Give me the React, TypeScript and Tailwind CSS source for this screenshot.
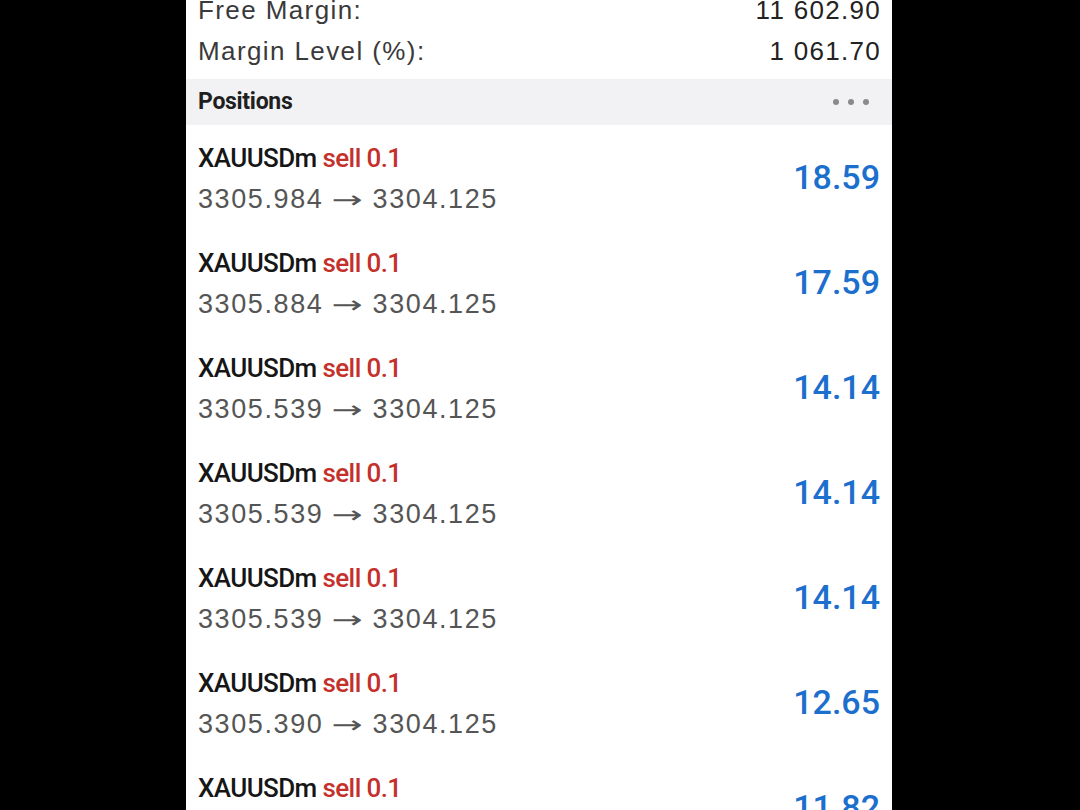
import React from 'react';

type Position = {
  symbol: string;
  side: string;
  volume: string;
  open: string;
  current: string;
  profit: string;
};

const positions: Position[] = [
  { symbol: 'XAUUSDm', side: 'sell', volume: '0.1', open: '3305.984', current: '3304.125', profit: '18.59' },
  { symbol: 'XAUUSDm', side: 'sell', volume: '0.1', open: '3305.884', current: '3304.125', profit: '17.59' },
  { symbol: 'XAUUSDm', side: 'sell', volume: '0.1', open: '3305.539', current: '3304.125', profit: '14.14' },
  { symbol: 'XAUUSDm', side: 'sell', volume: '0.1', open: '3305.539', current: '3304.125', profit: '14.14' },
  { symbol: 'XAUUSDm', side: 'sell', volume: '0.1', open: '3305.539', current: '3304.125', profit: '14.14' },
  { symbol: 'XAUUSDm', side: 'sell', volume: '0.1', open: '3305.390', current: '3304.125', profit: '12.65' },
  { symbol: 'XAUUSDm', side: 'sell', volume: '0.1', open: '3305.307', current: '3304.125', profit: '11.82' },
];

const sans = "font-['Liberation_Sans',Arial,sans-serif]";
const cond = "font-['Roboto',sans-serif]";

const SummaryLine: React.FC<{ label: string; value: string }> = ({ label, value }) => (
  <div className={`flex justify-between items-center h-[41px] leading-[41px] text-[26px] tracking-[1.4px] ${sans}`}>
    <span className="text-[#3a3a3a]">{label}</span>
    <span className="text-[#222] tracking-[1.3px] -mr-[1px]">{value}</span>
  </div>
);

const PositionRow: React.FC<{ p: Position }> = ({ p }) => (
  <div className="flex justify-between h-[105px] px-3">
    <div className="pt-[13px]">
      <div className={`leading-[41px] text-[26px] font-medium tracking-[-0.6px] ${cond}`}>
        <span className="text-[#161616]">{p.symbol}</span>{' '}
        <span className="text-[#c4302b]">
          {p.side} {p.volume}
        </span>
      </div>
      <div className={`leading-[41px] text-[27px] tracking-[1.6px] text-[#555] ${sans}`}>
        {p.open}
        <span className="inline-block ml-[14px] mr-[15px] scale-x-[1.55] font-['DejaVu_Sans',sans-serif] text-[24px] tracking-normal">
          →
        </span>
        {p.current}
      </div>
    </div>
    <div className={`self-center text-[34px] font-medium text-[#1c6fcd] ${cond}`}>{p.profit}</div>
  </div>
);

const App: React.FC = () => {
  return (
    <div className="w-[1080px] h-[810px] bg-black overflow-hidden pl-[186px]">
      <div className="w-[706px] h-[810px] bg-white overflow-hidden">
        {/* account summary (scrolled) */}
        <div className="-mt-[10px] px-3 pb-[7px]">
          <SummaryLine label="Free Margin:" value="11 602.90" />
          <SummaryLine label="Margin Level (%):" value="1 061.70" />
        </div>

        {/* positions header */}
        <div className="h-[46px] bg-[#f2f2f4] flex items-center justify-between pl-3 pr-[23px]">
          <span className={`text-[23px] font-bold tracking-[-0.3px] text-[#1f1f1f] ${cond}`}>Positions</span>
          <div className="flex gap-[9px]">
            <span className="w-[6px] h-[6px] rounded-full bg-[#8a8a8a]" />
            <span className="w-[6px] h-[6px] rounded-full bg-[#8a8a8a]" />
            <span className="w-[6px] h-[6px] rounded-full bg-[#8a8a8a]" />
          </div>
        </div>

        {positions.map((p, i) => (
          <PositionRow key={i} p={p} />
        ))}
      </div>
    </div>
  );
};

export default App;
